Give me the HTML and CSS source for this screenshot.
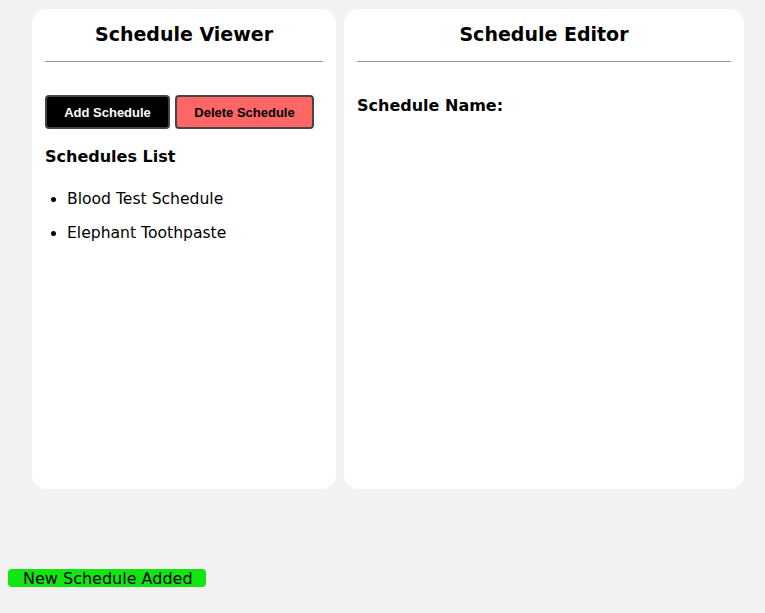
FILE: index.html
```html
<!DOCTYPE html>
<html>
<head>
<meta charset="utf-8">
<link rel="stylesheet" href="styles.css">
</head>
<body>
<div class="panels">
  <section class="panel viewer">
    <h2 class="title">Schedule Viewer</h2>
    <hr class="rule">
    <div class="actions">
      <button class="btn btn-add">Add Schedule</button>
      <button class="btn btn-delete">Delete Schedule</button>
    </div>
    <h3 class="subtitle">Schedules List</h3>
    <ul class="list">
      <li>Blood Test Schedule</li>
      <li>Elephant Toothpaste</li>
    </ul>
  </section>
  <section class="panel editor">
    <h2 class="title">Schedule Editor</h2>
    <hr class="rule">
    <h3 class="label">Schedule Name:</h3>
  </section>
</div>
<div class="toast">New Schedule Added</div>
</body>
</html>
```
FILE: styles.css
```css
html, body {
  margin: 0;
  padding: 0;
}
body {
  background: #f2f2f2;
  font-family: "DejaVu Sans", Verdana, sans-serif;
  color: #000;
  padding: 9px 8px 0 8px;
}
.panels {
  display: flex;
  gap: 8px;
  margin-left: 24px;
}
.panel {
  background: #fff;
  border-radius: 14px;
  height: 480px;
  box-sizing: border-box;
  padding: 12px 13px;
}
.viewer { width: 304px; }
.editor { width: 400px; }
.title {
  margin: 0;
  text-align: center;
  font-size: 19px;
  font-weight: bold;
  line-height: 26px;
}
.rule {
  border: none;
  border-top: 1px solid #999;
  margin: 14px 0 0 0;
}
.actions {
  display: flex;
  gap: 5px;
  margin-top: 33px;
}
.btn {
  font-family: "Liberation Sans", Arial, sans-serif;
  font-weight: bold;
  font-size: 13px;
  height: 34px;
  border: 2px solid #444;
  border-radius: 4px;
  padding: 0;
}
.btn-add {
  width: 125px;
  background: #000;
  color: #fff;
}
.btn-delete {
  width: 139px;
  background: #ff6666;
  color: #000;
}
.subtitle {
  margin: 18px 0 0 0;
  font-size: 16px;
  line-height: 20px;
}
.label {
  margin: 34px 0 0 0;
  font-size: 16px;
  line-height: 20px;
}
.list {
  margin: 22px 0 0 0;
  padding-left: 22px;
  font-size: 15.6px;
}
.list li {
  line-height: 20px;
  margin-bottom: 14px;
}
.toast {
  margin-top: 80px;
  width: 198px;
  height: 18px;
  box-sizing: border-box;
  background: #12e612;
  border-radius: 4px;
  font-size: 16px;
  line-height: 16px;
  padding: 2px 0 0 15px;
}
```
